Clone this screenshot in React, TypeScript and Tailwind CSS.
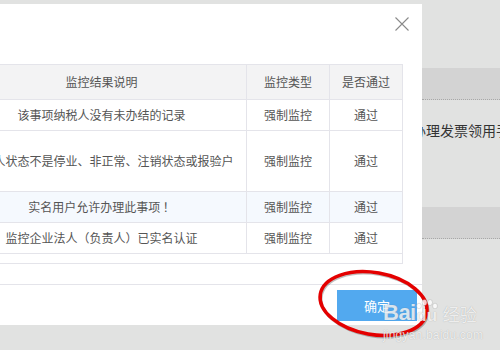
const rows = [
  { desc: "该事项纳税人没有未办结的记录", type: "强制监控", pass: "通过", h: "h-[31px]", bg: "bg-white" },
  { desc: "纳税人状态不是停业、非正常、注销状态或报验户", type: "强制监控", pass: "通过", h: "h-[61px]", bg: "bg-white" },
  { desc: "实名用户允许办理此事项 ！", type: "强制监控", pass: "通过", h: "h-[31px]", bg: "bg-[#f5f9fe]" },
  { desc: "监控企业法人（负责人）已实名认证", type: "强制监控", pass: "通过", h: "h-[31px]", bg: "bg-white" },
];

const cell = "border border-[#e4e4ea] text-center align-middle p-0 whitespace-nowrap overflow-hidden";

const Watermark = () => (
  <div className="absolute left-[383px] top-[299px] flex flex-col font-['Liberation_Sans',sans-serif] text-white/80 [text-shadow:0_0_1px_rgba(0,0,0,0.3)]">
    <div className="flex items-end gap-[5px]">
      <div className="flex items-end">
        <span className="text-[22px] font-bold leading-[22px] tracking-[-0.5px]">Bai</span>
        <div className="relative flex flex-col items-center">
          <svg width="22" height="10" viewBox="0 0 22 10" className="mb-[-1px]">
            <g fill="rgba(255,255,255,0.8)" stroke="rgba(0,0,0,0.2)" strokeWidth="0.6">
              <ellipse cx="3" cy="7" rx="2.4" ry="2.8" />
              <ellipse cx="8.5" cy="3.5" rx="2.4" ry="3" />
              <ellipse cx="14" cy="3.5" rx="2.4" ry="3" />
              <ellipse cx="19" cy="7" rx="2.4" ry="2.8" />
            </g>
          </svg>
          <span className="text-[17px] font-bold leading-[16px]">du</span>
        </div>
      </div>
      <span className="text-[17px] leading-[20px] font-['Noto_Sans_CJK_SC',sans-serif]">经验</span>
    </div>
    <span className="mt-[5px] text-[12px] leading-[12px] tracking-[0.2px]">jingyan.baidu.com</span>
  </div>
);

export default function App() {
  return (
    <div className="relative w-[500px] h-[350px] overflow-hidden bg-[#e1e2e1] flex font-['Noto_Sans_CJK_SC','Liberation_Sans',sans-serif]">
      <div className="relative z-10 -ml-[64px] mt-[4px] w-[486px] h-[321px] shrink-0 bg-white flex flex-col">
        <div className="h-[60px] flex justify-end items-start pt-[13px] pr-[13px]">
          <svg width="14" height="14" viewBox="0 0 14 14">
            <path d="M0.5 0.5 L13.5 13.5 M13.5 0.5 L0.5 13.5" stroke="#8a8a8a" strokeWidth="1.1" />
          </svg>
        </div>
        <div className="ml-[20px] w-[447px] border-r border-b border-[#e4e4ea] pb-[9px]">
          <table className="w-[446px] table-fixed border-collapse text-[12px] text-[#555]">
            <colgroup>
              <col className="w-[290px]" />
              <col className="w-[83px]" />
              <col className="w-[73px]" />
            </colgroup>
            <thead>
              <tr className="h-[35px] bg-[#f3f3f4]">
                <th className={`${cell} font-normal`}>监控结果说明</th>
                <th className={`${cell} font-normal`}>监控类型</th>
                <th className={`${cell} font-normal`}>是否通过</th>
              </tr>
            </thead>
            <tbody>
              {rows.map((r, i) => (
                <tr key={i} className={`${r.h} ${r.bg}`}>
                  <td className={cell}>{r.desc}</td>
                  <td className={cell}>{r.type}</td>
                  <td className={cell}>{r.pass}</td>
                </tr>
              ))}
            </tbody>
          </table>
        </div>
        <div className="mt-[20px] border-t border-[#e4e4ea] flex justify-end pt-[5px] pr-[5px]">
          <button className="w-[80px] h-[31px] bg-[#52a9ef] text-white text-[13px]">确定</button>
        </div>
      </div>
      <div className="flex-1 flex flex-col">
        <div className="h-[68px]" />
        <div className="h-[32px] bg-[#d3d3d3] border-b border-dotted border-[#a8a8a8]" />
        <div className="h-[107px] pt-[21px]">
          <p className="-ml-[10px] whitespace-nowrap text-[14px] leading-[18px] text-[#333]">办理发票领用手续</p>
        </div>
        <div className="h-[32px] bg-[#d3d3d3] border-b border-dotted border-[#a8a8a8]" />
      </div>
      <svg className="absolute left-0 top-0 z-20 pointer-events-none" width="500" height="350">
        <ellipse cx="374.5" cy="305" rx="54" ry="31" transform="rotate(10 374.5 305)" fill="none" stroke="rgba(0,0,0,0.25)" strokeWidth="3" />
        <ellipse cx="373.5" cy="303.5" rx="54" ry="31" transform="rotate(10 373.5 303.5)" fill="none" stroke="#e40000" strokeWidth="3.5" />
      </svg>
      <div className="absolute inset-0 z-30 pointer-events-none">
        <Watermark />
      </div>
    </div>
  );
}
